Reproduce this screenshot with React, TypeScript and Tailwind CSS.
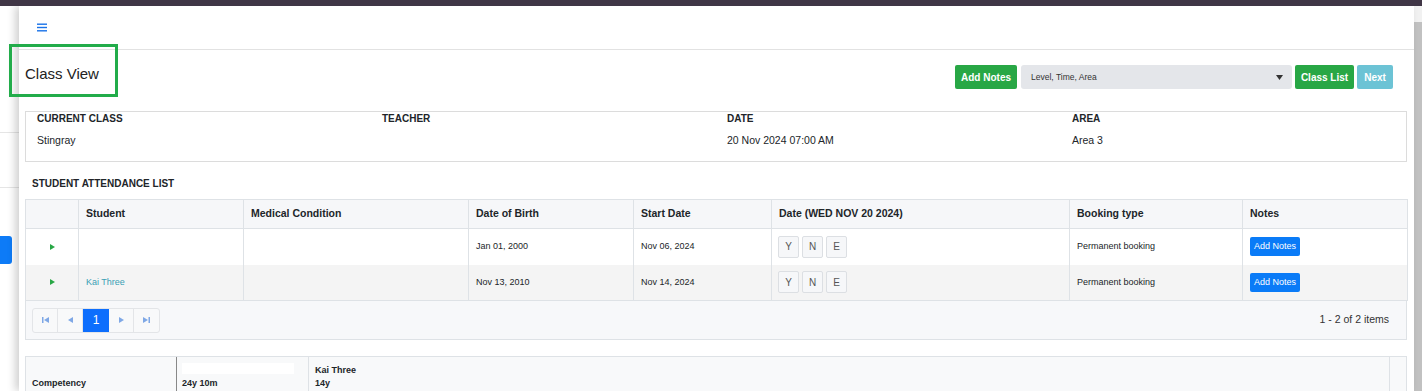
import React from "react";

const cols = [53, 165, 225, 165, 138, 298, 173, 165];

function Tri({ color = "#28a745", dir = "right", size = 5 }: { color?: string; dir?: "right" | "left"; size?: number }) {
  return (
    <svg width={size} height={size + 1} viewBox="0 0 5 6">
      {dir === "right" ? <polygon points="0,0 5,3 0,6" fill={color} /> : <polygon points="5,0 0,3 5,6" fill={color} />}
    </svg>
  );
}

function Pager() {
  const c = "#7fa8e6";
  return (
    <div className="flex h-[25px] border border-[#e3e5e8] rounded-[3px] overflow-hidden bg-[#f8f9fa]">
      <div className="w-[25px] flex items-center justify-center border-r border-[#e3e5e8]">
        <svg width="7" height="6" viewBox="0 0 7 6"><rect x="0" y="0" width="1.5" height="6" fill={c} /><polygon points="7,0 2,3 7,6" fill={c} /></svg>
      </div>
      <div className="w-[25px] flex items-center justify-center border-r border-[#e3e5e8]">
        <Tri color={c} dir="left" />
      </div>
      <div className="w-[26px] flex items-center justify-center bg-[#0d6efd] text-white text-[12px]">1</div>
      <div className="w-[25px] flex items-center justify-center border-r border-[#e3e5e8]">
        <Tri color={c} dir="right" />
      </div>
      <div className="w-[25px] flex items-center justify-center">
        <svg width="7" height="6" viewBox="0 0 7 6"><polygon points="0,0 5,3 0,6" fill={c} /><rect x="5.5" y="0" width="1.5" height="6" fill={c} /></svg>
      </div>
    </div>
  );
}

function YNE() {
  return (
    <div className="flex gap-[3px]">
      {["Y", "N", "E"].map((l) => (
        <div key={l} className="w-[21px] h-[22px] flex items-center justify-center border border-[#dcdfe3] rounded-[2px] bg-[#f6f7f9] text-[10px] text-[#555]">
          {l}
        </div>
      ))}
    </div>
  );
}

export default function App() {
  const rows = [
    { name: "", dob: "Jan 01, 2000", start: "Nov 06, 2024", bg: "bg-white" },
    { name: "Kai Three", dob: "Nov 13, 2010", start: "Nov 14, 2024", bg: "bg-[#f4f4f4]" },
  ];
  return (
    <div className="relative w-[1422px] h-[391px] overflow-hidden bg-white font-['Liberation_Sans',Arial,sans-serif] text-[#212529]">
      <div className="h-[6px] bg-[#403646]" />
      <div className="flex h-[385px] overflow-hidden">
        {/* background page strip */}
        <div className="w-[19px] shrink-0 bg-white flex flex-col">
          <div className="h-[127px] shrink-0 border-b border-[#e5e5e5]" />
          <div className="h-[55px] shrink-0 border-b border-[#e5e5e5]" />
          <div className="mt-[48px] shrink-0 w-[12px] h-[28px] bg-[#0d7bf7] rounded-r-[3px]" />
        </div>
        {/* drawer */}
        <div className="relative flex-1 bg-white shadow-[-4px_0_8px_rgba(0,0,0,0.18)] flex flex-col overflow-hidden">
          <div className="h-[44px] shrink-0 border-b border-[#e2e2e2] flex items-center pl-[18px] pb-[1px]">
            <svg width="10" height="9" viewBox="0 0 10 9">
              <rect x="0" y="0.5" width="10" height="1.4" fill="#1a73e8" />
              <rect x="0" y="3.8" width="10" height="1.4" fill="#1a73e8" />
              <rect x="0" y="7.1" width="10" height="1.4" fill="#1a73e8" />
            </svg>
          </div>
          <div className="shrink-0 pl-[6px] pr-[7px]">
            <div className="flex items-center mt-[15px] h-[24px]">
              <div className="text-[15px] mb-[6px] text-[#222]">Class View</div>
              <div className="ml-auto mr-[14px] flex items-center gap-[3px]">
                <button className="h-[24px] px-[6px] rounded-[2px] bg-[#28a745] text-white text-[10px] font-bold">Add Notes</button>
                <div className="w-[271px] h-[24px] ml-[1px] rounded-[3px] bg-[#e4e6ea] flex items-center pl-[10px] pr-[9px] text-[8.5px] text-[#333]">
                  <span>Level, Time, Area</span>
                  <svg className="ml-auto" width="7" height="5" viewBox="0 0 7 5"><polygon points="0,0 7,0 3.5,5" fill="#333" /></svg>
                </div>
                <button className="h-[24px] w-[59px] rounded-[2px] bg-[#28a745] text-white text-[10px] font-bold">Class List</button>
                <button className="h-[24px] w-[36px] rounded-[2px] bg-[#6cc3d5] text-white text-[10px] font-bold">Next</button>
              </div>
            </div>
            {/* info box */}
            <div className="mt-[22px] border border-[#dcdcdc] h-[51px] grid grid-cols-4">
              {[
                ["CURRENT CLASS", "Stingray"],
                ["TEACHER", ""],
                ["DATE", "20 Nov 2024 07:00 AM"],
                ["AREA", "Area 3"],
              ].map(([l, v]) => (
                <div key={l} className="pl-[11px]">
                  <div className="text-[10px] font-bold leading-[14px]">{l}</div>
                  <div className="mt-[7px] text-[10.5px] leading-[14px] h-[14px]">{v}</div>
                </div>
              ))}
            </div>
            <div className="mt-[15px] ml-[7px] text-[10px] font-bold leading-[14px]">STUDENT ATTENDANCE LIST</div>
            {/* table */}
            <table className="mt-[8px] w-full table-fixed border-collapse border border-[#dee2e6]">
              <colgroup>
                {cols.map((w, i) => (
                  <col key={i} style={{ width: w }} />
                ))}
              </colgroup>
              <thead>
                <tr className="h-[29px] bg-[#f6f7f9] text-[10.5px] font-bold text-left">
                  {["", "Student", "Medical Condition", "Date of Birth", "Start Date", "Date (WED NOV 20 2024)", "Booking type", "Notes"].map((h, i) => (
                    <th key={i} className="border border-[#dee2e6] px-[7px] font-bold">
                      {h}
                    </th>
                  ))}
                </tr>
              </thead>
              <tbody>
                {rows.map((r, i) => (
                  <tr key={i} className={`h-[36px] text-[9px] ${r.bg}`}>
                    <td className="border-x border-[#dee2e6]">
                      <div className="flex justify-center">
                        <Tri />
                      </div>
                    </td>
                    <td className="border-x border-[#dee2e6] px-[7px] text-[#3a9fb5]">{r.name}</td>
                    <td className="border-x border-[#dee2e6]" />
                    <td className="border-x border-[#dee2e6] px-[7px]">{r.dob}</td>
                    <td className="border-x border-[#dee2e6] px-[7px]">{r.start}</td>
                    <td className="border-x border-[#dee2e6] px-[6px]">
                      <YNE />
                    </td>
                    <td className="border-x border-[#dee2e6] px-[7px]">Permanent booking</td>
                    <td className="border-x border-[#dee2e6] px-[7px]">
                      <button className="h-[19px] w-[50px] rounded-[2px] bg-[#0a7bf7] text-white text-[9px]">Add Notes</button>
                    </td>
                  </tr>
                ))}
              </tbody>
            </table>
            <div className="h-[39px] border border-t-0 border-[#dee2e6] bg-[#f7f8fa] flex items-center pl-[6px] pr-[17px]">
              <Pager />
              <div className="ml-auto text-[10.5px] text-[#333]">1 - 2 of 2 items</div>
            </div>
            {/* bottom table */}
            <div className="mt-[16px] h-[60px] border border-[#dee2e6] bg-[#f8f9fa] flex">
              <div className="w-[151px] border-r border-[#888] pl-[6px] pt-[20px] text-[9px] font-bold">Competency</div>
              <div className="w-[132px] border-r border-[#dee2e6] pl-[5px] pt-[6px]">
                <div className="w-[112px] h-[11px] bg-white" />
                <div className="mt-[3px] text-[9px] font-bold">24y 10m</div>
              </div>
              <div className="flex-1 pl-[6px] pt-[7px] text-[9px] font-bold leading-[13px]">
                <div>Kai Three</div>
                <div>14y</div>
              </div>
              <div className="w-[17px] border-l border-[#dee2e6]" />
            </div>
          </div>
        </div>
        {/* scrollbar */}
        <div className="w-[8px] shrink-0 bg-[#f1f1f1] flex flex-col">
          <div className="h-[16px]" />
          <div className="flex-1 bg-[#c1c1c1]" />
        </div>
      </div>
      {/* annotation highlight */}
      <div className="absolute left-[9px] top-[44px] w-[109px] h-[53px] border-[3px] border-[#22ac4a]" />
    </div>
  );
}
